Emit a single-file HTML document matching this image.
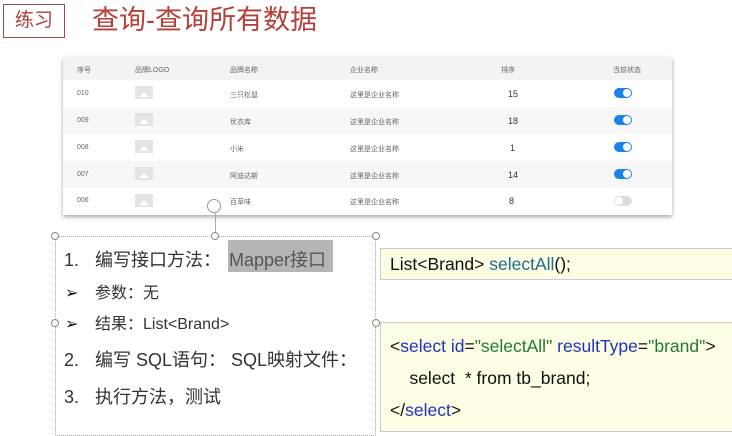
<!DOCTYPE html>
<html><head><meta charset="utf-8"><style>
*{margin:0;padding:0;box-sizing:border-box}
body{width:732px;height:429px;background:#fff;position:relative;overflow:hidden;font-family:"Liberation Sans","Noto Sans CJK SC",sans-serif}
.a{position:absolute;white-space:nowrap}
.tb{left:3px;top:4px;width:62px;height:34px;border:1.5px solid #a04a45;color:#b0403a;font-size:19px;line-height:31px;text-align:center}
.title{left:92px;top:2px;font-size:27px;color:#b5403a;line-height:36px}
.table{left:63px;top:57px;width:609px;height:158px;box-shadow:0 2px 4px rgba(0,0,0,.35);background:#fff}
.hd{position:absolute;left:0;top:0;width:609px;height:23px;background:#f3f3f3}
.row{position:absolute;left:0;width:609px;height:27px}
.t{position:absolute;font-size:7px;color:#666}
.img{position:absolute;width:18px;height:13px;background:#e4e4e4}
.img:after{content:"";position:absolute;left:4px;top:6px;border-left:5px solid transparent;border-right:5px solid transparent;border-bottom:5px solid #fff}
.sw{position:absolute;left:551px;width:18px;height:10px;border-radius:5px;background:#1b82e8}
.sw:after{content:"";position:absolute;right:1px;top:1px;width:8px;height:8px;border-radius:50%;background:#fff}
.sw.off{background:#ddd}.sw.off:after{left:1px;right:auto}
.sel{left:55px;top:236px;width:321px;height:200px;border:1px dotted #aaa}
.h{position:absolute;width:8px;height:8px;border:1px solid #888;border-radius:50%;background:#fff}
.code{position:absolute;left:380px;width:360px;background:#fdfde4;border:1px solid #ccc;font-size:17.5px;color:#111}
.bl{color:#2233bb}.gr{color:#207a3a}.tl{color:#1c6e8a}
.l{font-size:18px;color:#333;line-height:24px}
.s{font-size:16px;color:#333;line-height:22px}
</style></head><body>
<div class="a tb">练习</div>
<div class="a title">查询-查询所有数据</div>
<div class="a table">
<div class="hd"></div>
<div class="t" style="left:14px;top:8px">序号</div>
<div class="t" style="left:72px;top:8px">品牌LOGO</div>
<div class="t" style="left:167px;top:8px">品牌名称</div>
<div class="t" style="left:287px;top:8px">企业名称</div>
<div class="t" style="left:438px;top:8px">排序</div>
<div class="t" style="left:550px;top:8px">当前状态</div>
<div class="row" style="top:23px;background:#fff"></div>
<div class="row" style="top:50px;background:#f7f7f7"></div>
<div class="row" style="top:77px;background:#fff"></div>
<div class="row" style="top:104px;background:#f7f7f7"></div>
<div class="row" style="top:131px;background:#fff"></div>
<div class="t" style="left:14px;top:33px">010</div><div class="img" style="left:72px;top:29px"></div><div class="t" style="left:167px;top:33px">三只松鼠</div><div class="t" style="left:287px;top:33px">这里是企业名称</div><div class="t" style="left:445px;top:32px;font-size:9px;color:#333">15</div><div class="sw" style="top:31px"></div>
<div class="t" style="left:14px;top:60px">009</div><div class="img" style="left:72px;top:56px"></div><div class="t" style="left:167px;top:60px">优衣库</div><div class="t" style="left:287px;top:60px">这里是企业名称</div><div class="t" style="left:445px;top:59px;font-size:9px;color:#333">18</div><div class="sw" style="top:58px"></div>
<div class="t" style="left:14px;top:87px">008</div><div class="img" style="left:72px;top:83px"></div><div class="t" style="left:167px;top:87px">小米</div><div class="t" style="left:287px;top:87px">这里是企业名称</div><div class="t" style="left:447px;top:86px;font-size:9px;color:#333">1</div><div class="sw" style="top:85px"></div>
<div class="t" style="left:14px;top:114px">007</div><div class="img" style="left:72px;top:110px"></div><div class="t" style="left:167px;top:114px">阿迪达斯</div><div class="t" style="left:287px;top:114px">这里是企业名称</div><div class="t" style="left:445px;top:113px;font-size:9px;color:#333">14</div><div class="sw" style="top:112px"></div>
<div class="t" style="left:14px;top:140px">006</div><div class="img" style="left:72px;top:137px"></div><div class="t" style="left:167px;top:140px">百草味</div><div class="t" style="left:287px;top:140px">这里是企业名称</div><div class="t" style="left:446px;top:139px;font-size:9px;color:#333">8</div><div class="sw off" style="top:139px"></div>
</div>
<div class="a" style="left:207px;top:199px;width:14px;height:14px;border:1.5px solid #999;border-radius:50%;background:#fff"></div>
<div class="a" style="left:215px;top:213px;width:1px;height:23px;background:#aaa"></div>
<div class="a sel"></div>
<div class="h" style="left:51px;top:232px"></div><div class="h" style="left:211px;top:232px"></div><div class="h" style="left:372px;top:232px"></div>
<div class="h" style="left:51px;top:319px"></div><div class="h" style="left:372px;top:319px"></div>
<div class="a" style="left:228px;top:240px;width:105px;height:32px;background:#b5b5b5"></div>
<div class="a l" style="left:64px;top:248px">1.</div>
<div class="a l" style="left:95px;top:248px">编写接口方法：</div>
<div class="a l" style="left:229px;top:248px;color:#555">Mapper接口</div>
<div class="a s" style="left:65px;top:283px;color:#111">➢</div><div class="a s" style="left:95px;top:283px">参数：无</div>
<div class="a s" style="left:65px;top:314px;color:#111">➢</div><div class="a s" style="left:95px;top:314px">结果：List&lt;Brand&gt;</div>
<div class="a l" style="left:64px;top:348px">2.</div><div class="a l" style="left:95px;top:348px">编写 SQL语句：&nbsp;SQL映射文件：</div>
<div class="a l" style="left:64px;top:385px">3.</div><div class="a l" style="left:95px;top:385px">执行方法，测试</div>
<div class="code" style="top:248px;height:32px;padding:5px 0 0 9px">List&lt;Brand&gt; <span class="tl">selectAll</span>();</div>
<div class="code" style="top:322px;height:110px;padding:7px 0 0 9px;line-height:32px">&lt;<span class="bl">select</span> <span class="bl">id</span>=<span class="gr">"selectAll"</span> <span class="bl">resultType</span>=<span class="gr">"brand"</span>&gt;<br>&nbsp;&nbsp;&nbsp;&nbsp;select&nbsp; * from tb_brand;<br>&lt;/<span class="bl">select</span>&gt;</div>
</body></html>
